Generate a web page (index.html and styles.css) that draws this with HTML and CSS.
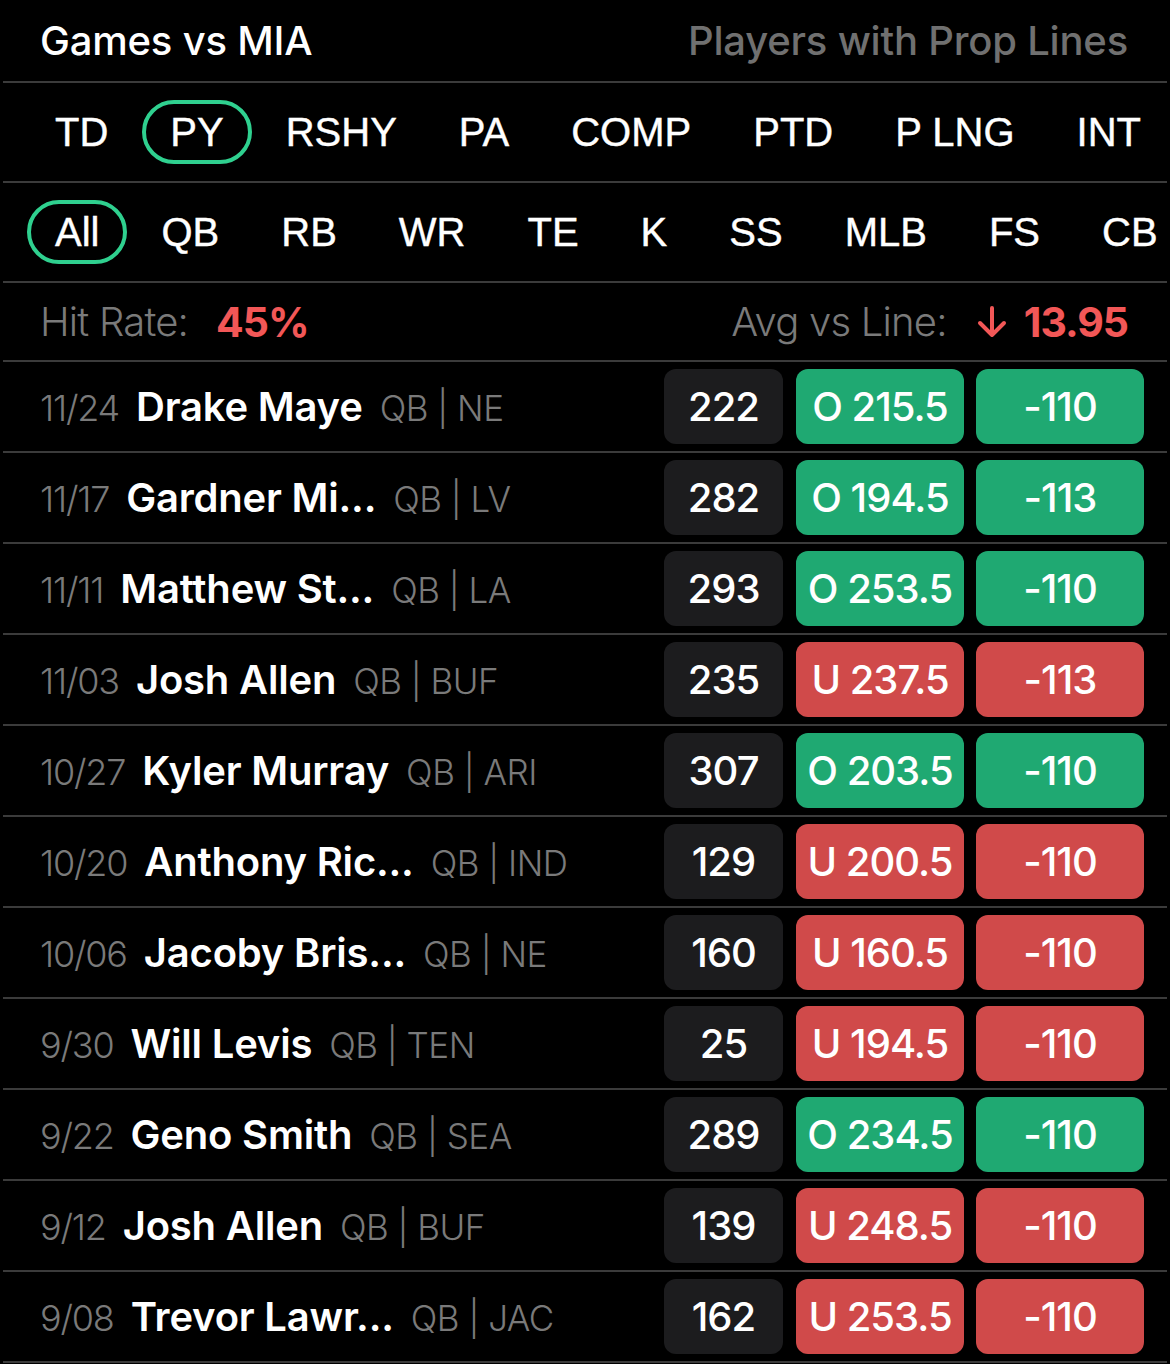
FILE: index.html
```html
<!DOCTYPE html>
<html lang="en">
<head>
  <meta charset="UTF-8" />
  <title>Games vs MIA</title>
  <link rel="stylesheet" href="styles.css">
</head>
<body>
  <div class="panel">
    <!-- Header -->
    <div class="panel-header">
      <h1>Games vs MIA</h1>
      <span class="subtitle">Players with Prop Lines</span>
    </div>

    <!-- Stat tabs -->
    <div class="tab-row">
      <span class="tab">TD</span>
      <span class="tab active">PY</span>
      <span class="tab">RSHY</span>
      <span class="tab">PA</span>
      <span class="tab">COMP</span>
      <span class="tab">PTD</span>
      <span class="tab">P LNG</span>
      <span class="tab">INT</span>
    </div>

    <!-- Position tabs -->
    <div class="tab-row">
      <span class="tab active">All</span>
      <span class="tab">QB</span>
      <span class="tab">RB</span>
      <span class="tab">WR</span>
      <span class="tab">TE</span>
      <span class="tab">K</span>
      <span class="tab">SS</span>
      <span class="tab">MLB</span>
      <span class="tab">FS</span>
      <span class="tab">CB</span>
    </div>

    <!-- Summary -->
    <div class="summary">
      <div class="summary-item">
        <span class="label">Hit Rate:</span>
        <span class="value-red">45%</span>
      </div>
      <div class="summary-item">
        <span class="label">Avg vs Line:</span>
        <svg class="arrow" width="34" height="34" viewBox="0 0 34 34" fill="none" stroke="#f25757" stroke-width="4" stroke-linecap="round" stroke-linejoin="round">
          <path d="M17 3 V30 M5 18 L17 30 L29 18" />
        </svg>
        <span class="value-red">13.95</span>
      </div>
    </div>

    <div id="gameList"></div>
  </div>

  <script>
    const games = [
      { date: "11/24", name: "Drake Maye", pos: "QB | NE", actual: 222, line: "O 215.5", odds: "-110", hit: true },
      { date: "11/17", name: "Gardner Mi...", pos: "QB | LV", actual: 282, line: "O 194.5", odds: "-113", hit: true },
      { date: "11/11", name: "Matthew St...", pos: "QB | LA", actual: 293, line: "O 253.5", odds: "-110", hit: true },
      { date: "11/03", name: "Josh Allen", pos: "QB | BUF", actual: 235, line: "U 237.5", odds: "-113", hit: false },
      { date: "10/27", name: "Kyler Murray", pos: "QB | ARI", actual: 307, line: "O 203.5", odds: "-110", hit: true },
      { date: "10/20", name: "Anthony Ric...", pos: "QB | IND", actual: 129, line: "U 200.5", odds: "-110", hit: false },
      { date: "10/06", name: "Jacoby Bris...", pos: "QB | NE", actual: 160, line: "U 160.5", odds: "-110", hit: false },
      { date: "9/30", name: "Will Levis", pos: "QB | TEN", actual: 25, line: "U 194.5", odds: "-110", hit: false },
      { date: "9/22", name: "Geno Smith", pos: "QB | SEA", actual: 289, line: "O 234.5", odds: "-110", hit: true },
      { date: "9/12", name: "Josh Allen", pos: "QB | BUF", actual: 139, line: "U 248.5", odds: "-110", hit: false },
      { date: "9/08", name: "Trevor Lawr...", pos: "QB | JAC", actual: 162, line: "U 253.5", odds: "-110", hit: false }
    ];

    function renderGames() {
      const list = document.getElementById('gameList');
      list.innerHTML = games.map(g => `
        <div class="game-row">
          <div class="game-info">
            <span class="date">${g.date}</span>
            <span class="player">${g.name}</span>
            <span class="pos">${g.pos}</span>
          </div>
          <div class="box stat">${g.actual}</div>
          <div class="box line ${g.hit ? 'over' : 'under'}">${g.line}</div>
          <div class="box odds ${g.hit ? 'over' : 'under'}">${g.odds}</div>
        </div>
      `).join('');
    }

    renderGames();
  </script>
</body>
</html>
```

FILE: styles.css
```css
body {
  margin: 0;
  background: #000;
  color: #fff;
  font-family: Inter, "Liberation Sans", sans-serif;
}

.panel {
  width: 1170px;
  overflow: hidden;
}

/* Header */
.panel-header {
  display: flex;
  justify-content: space-between;
  align-items: center;
  height: 81px;
  margin: 0 3px;
  padding: 0 39px 0 37px;
  border-bottom: 2px solid #3b3b3b;
}
.panel-header h1 {
  margin: 0;
  font-size: 40px;
  font-weight: 500;
  letter-spacing: -0.2px;
}
.subtitle {
  font-size: 40px;
  font-weight: 500;
  color: #707070;
  letter-spacing: -0.2px;
}

/* Tabs */
.tab-row {
  display: flex;
  align-items: center;
  gap: 6px;
  height: 98px;
  margin: 0 3px;
  padding-left: 24px;
  border-bottom: 2px solid #3b3b3b;
  white-space: nowrap;
  overflow: hidden;
  font-family: "Liberation Sans", sans-serif;
  font-size: 40px;
  -webkit-text-stroke: 0.4px #fff;
}
.tab {
  padding: 4px 24px;
  border: 4px solid transparent;
  border-radius: 34px;
  line-height: 48px;
}
.tab.active {
  border-color: #2fd08f;
}

/* Summary */
.summary {
  display: flex;
  justify-content: space-between;
  align-items: center;
  height: 77px;
  margin: 0 3px;
  padding: 0 39px 0 37px;
  border-bottom: 2px solid #3b3b3b;
  font-size: 40px;
}
.summary-item {
  display: flex;
  align-items: center;
}
.label {
  color: #7a7a7a;
  font-weight: 300;
  margin-right: 28px;
  letter-spacing: -0.8px;
}
.value-red {
  color: #f25757;
  font-weight: 700;
  font-size: 41px;
  letter-spacing: -1px;
}
.arrow {
  margin-right: 15px;
}

/* Game rows */
.game-row {
  display: flex;
  align-items: center;
  height: 89px;
  margin: 0 3px;
  padding: 0 23px 0 37px;
  border-bottom: 2px solid #3b3b3b;
}
.game-info {
  flex: 1;
  display: flex;
  align-items: baseline;
  gap: 17px;
  white-space: nowrap;
}
.date {
  font-size: 36px;
  font-weight: 300;
  color: #7a7a7a;
  letter-spacing: -1.2px;
}
.player {
  font-size: 40px;
  font-weight: 600;
  letter-spacing: -0.2px;
}
.pos {
  font-size: 35px;
  font-weight: 300;
  color: #7a7a7a;
  letter-spacing: -0.5px;
}

.box {
  display: flex;
  align-items: center;
  justify-content: center;
  height: 75px;
  border-radius: 12px;
  font-size: 40px;
  font-weight: 500;
  letter-spacing: -1px;
}
.stat {
  width: 119px;
  margin-right: 13px;
  background: #1c1c1e;
}
.line {
  width: 168px;
  margin-right: 12px;
}
.odds {
  width: 168px;
}
.over {
  background: #1fa972;
}
.under {
  background: #d04a4a;
}
```
